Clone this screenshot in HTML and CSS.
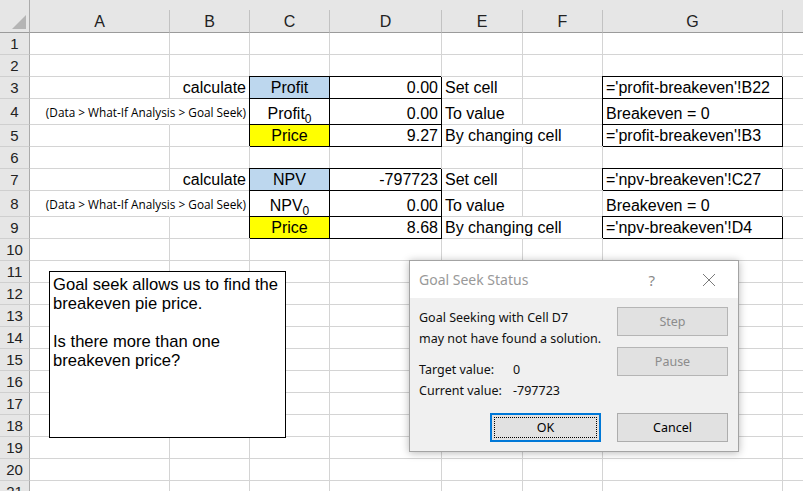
FILE: index.html
```html
<!DOCTYPE html>
<html lang="en">
<head>
<meta charset="utf-8">
<title>Goal Seek</title>
<link rel="stylesheet" href="styles.css">
</head>
<body>
<div class="sheet">
  <div class="grid">
    <div class="corner"><svg width="30" height="33" viewBox="0 0 30 33"><polygon points="12,29 26,29 26,15" fill="#b5b5b5"/></svg></div>
    <div class="topbar"></div>
    <div class="ch">A</div><div class="ch">B</div><div class="ch">C</div><div class="ch">D</div><div class="ch">E</div><div class="ch">F</div><div class="ch">G</div><div class="ch"></div>

    <div class="rh">1</div><div class="c"></div><div class="c"></div><div class="c"></div><div class="c"></div><div class="c"></div><div class="c"></div><div class="c"></div><div class="c"></div>
    <div class="rh">2</div><div class="c"></div><div class="c"></div><div class="c"></div><div class="c"></div><div class="c"></div><div class="c"></div><div class="c"></div><div class="c"></div>

    <div class="rh">3</div><div class="c"></div><div class="c r">calculate</div><div class="c m box blue">Profit</div><div class="c r box">0.00</div><div class="c">Set cell</div><div class="c"></div><div class="c box">='profit-breakeven'!B22</div><div class="c"></div>
    <div class="rh">4</div><div class="c nr"></div><div class="c r note">(Data &gt; What-If Analysis &gt; Goal Seek)</div><div class="c m box tall"><span>Profit<span class="sub">0</span></span></div><div class="c r box">0.00</div><div class="c">To value</div><div class="c"></div><div class="c box">Breakeven = 0</div><div class="c"></div>
    <div class="rh">5</div><div class="c"></div><div class="c"></div><div class="c m box yellow">Price</div><div class="c r box">9.27</div><div class="c nr">By changing cell</div><div class="c"></div><div class="c box">='profit-breakeven'!B3</div><div class="c"></div>
    <div class="rh">6</div><div class="c"></div><div class="c"></div><div class="c"></div><div class="c"></div><div class="c"></div><div class="c"></div><div class="c"></div><div class="c"></div>
    <div class="rh">7</div><div class="c"></div><div class="c r">calculate</div><div class="c m box blue">NPV</div><div class="c r box">-797723</div><div class="c">Set cell</div><div class="c"></div><div class="c box">='npv-breakeven'!C27</div><div class="c"></div>
    <div class="rh">8</div><div class="c nr"></div><div class="c r note">(Data &gt; What-If Analysis &gt; Goal Seek)</div><div class="c m box tall"><span>NPV<span class="sub">0</span></span></div><div class="c r box">0.00</div><div class="c">To value</div><div class="c"></div><div class="c">Breakeven = 0</div><div class="c"></div>
    <div class="rh">9</div><div class="c"></div><div class="c"></div><div class="c m box yellow">Price</div><div class="c r box">8.68</div><div class="c nr">By changing cell</div><div class="c"></div><div class="c box">='npv-breakeven'!D4</div><div class="c"></div>

    <div class="rh">10</div><div class="c"></div><div class="c"></div><div class="c"></div><div class="c"></div><div class="c"></div><div class="c"></div><div class="c"></div><div class="c"></div>
    <div class="rh">11</div><div class="c"></div><div class="c"></div><div class="c"></div><div class="c"></div><div class="c"></div><div class="c"></div><div class="c"></div><div class="c"></div>
    <div class="rh">12</div><div class="c"></div><div class="c"></div><div class="c"></div><div class="c"></div><div class="c"></div><div class="c"></div><div class="c"></div><div class="c"></div>
    <div class="rh">13</div><div class="c"></div><div class="c"></div><div class="c"></div><div class="c"></div><div class="c"></div><div class="c"></div><div class="c"></div><div class="c"></div>
    <div class="rh">14</div><div class="c"></div><div class="c"></div><div class="c"></div><div class="c"></div><div class="c"></div><div class="c"></div><div class="c"></div><div class="c"></div>
    <div class="rh">15</div><div class="c"></div><div class="c"></div><div class="c"></div><div class="c"></div><div class="c"></div><div class="c"></div><div class="c"></div><div class="c"></div>
    <div class="rh">16</div><div class="c"></div><div class="c"></div><div class="c"></div><div class="c"></div><div class="c"></div><div class="c"></div><div class="c"></div><div class="c"></div>
    <div class="rh">17</div><div class="c"></div><div class="c"></div><div class="c"></div><div class="c"></div><div class="c"></div><div class="c"></div><div class="c"></div><div class="c"></div>
    <div class="rh">18</div><div class="c"></div><div class="c"></div><div class="c"></div><div class="c"></div><div class="c"></div><div class="c"></div><div class="c"></div><div class="c"></div>
    <div class="rh">19</div><div class="c"></div><div class="c"></div><div class="c"></div><div class="c"></div><div class="c"></div><div class="c"></div><div class="c"></div><div class="c"></div>
    <div class="rh">20</div><div class="c"></div><div class="c"></div><div class="c"></div><div class="c"></div><div class="c"></div><div class="c"></div><div class="c"></div><div class="c"></div>
    <div class="rh">21</div><div class="c"></div><div class="c"></div><div class="c"></div><div class="c"></div><div class="c"></div><div class="c"></div><div class="c"></div><div class="c"></div>
  </div>

  <div class="textbox">
    <p>Goal seek allows us to find the<br>breakeven pie price.</p>
    <p>Is there more than one<br>breakeven price?</p>
  </div>

  <div class="dlg">
    <div class="dlg-title">
      <span class="dlg-name">Goal Seek Status</span>
      <span class="dlg-help">?</span>
      <svg class="dlg-close" width="14" height="14" viewBox="0 0 14 14"><path d="M1 1 L13 13 M13 1 L1 13" stroke="#7a7a7a" stroke-width="1" fill="none"/></svg>
    </div>
    <div class="dlg-body">
      <div class="dlg-top">
        <div class="dlg-msg">
          <p>Goal Seeking with Cell D7</p>
          <p>may not have found a solution.</p>
          <div class="dlg-vals">
            <span>Target value:</span><span>0</span>
            <span>Current value:</span><span>-797723</span>
          </div>
        </div>
        <div class="dlg-side">
          <button class="btn" disabled>Step</button>
          <button class="btn" disabled>Pause</button>
        </div>
      </div>
      <div class="dlg-foot">
        <button class="btn ok">OK</button>
        <button class="btn">Cancel</button>
      </div>
    </div>
  </div>
</div>
</body>
</html>
```

FILE: styles.css
```css
html, body {
  margin: 0;
  padding: 0;
  background: #fff;
}
body {
  font-family: "Liberation Sans", Arial, sans-serif;
  color: #000;
  overflow: hidden;
}
.sheet {
  position: relative;
  width: 803px;
  height: 491px;
  overflow: hidden;
}
.grid {
  display: grid;
  grid-template-columns: 30px 140px 80px 80px 112px 81px 80px 180px 40px;
  grid-template-rows: 10px 23px repeat(3, 22px) 26px repeat(3, 22px) 26px repeat(13, 22px);
}
.grid > div {
  box-sizing: border-box;
  min-width: 0;
}
.corner {
  grid-row: 1 / 3;
  grid-column: 1;
  background: #e6e6e6;
  border-right: 1px solid #ababab;
  border-bottom: 1px solid #9b9b9b;
  overflow: hidden;
}
.corner svg {
  display: block;
}
.topbar {
  grid-row: 1;
  grid-column: 2 / -1;
  background: #e6e6e6;
}
.ch {
  background: #e6e6e6;
  border-right: 1px solid #c2c2c2;
  border-bottom: 1px solid #9b9b9b;
  display: flex;
  align-items: center;
  justify-content: center;
  padding-top: 2px;
  font-size: 16px;
  color: #222;
}
.rh {
  background: #e6e6e6;
  border-right: 1px solid #ababab;
  border-bottom: 1px solid #cfcfcf;
  display: flex;
  align-items: center;
  justify-content: center;
  font-size: 15px;
  color: #222;
}
.c {
  border-right: 1px solid #d4d4d4;
  border-bottom: 1px solid #d4d4d4;
  display: flex;
  align-items: flex-end;
  padding: 0 3px 1px 3px;
  font-size: 16px;
  line-height: 18px;
  white-space: nowrap;
}
.r { justify-content: flex-end; }
.m { justify-content: center; }
.nr { border-right-color: transparent; }
.box {
  border-right-color: #000;
  border-bottom-color: #000;
  box-shadow: -1px -1px 0 0 #000;
}
.blue { background: #bdd7ee; }
.yellow { background: #ffff00; }
.tall { padding-bottom: 1px; }
.sub {
  font-size: 12px;
  line-height: 0;
  vertical-align: -4px;
}
.note {
  align-items: center;
  padding-bottom: 0;
  font-family: "Open Sans", "Noto Sans", sans-serif;
  font-size: 11.8px;
}

.textbox {
  position: absolute;
  left: 49px;
  top: 271px;
  width: 237px;
  height: 167px;
  box-sizing: border-box;
  border: 1px solid #000;
  background: #fff;
  padding: 3px 3px;
  font-size: 16.6px;
  line-height: 19px;
  white-space: nowrap;
}
.textbox p {
  margin: 0 0 19px 0;
}

.dlg {
  position: absolute;
  left: 409px;
  top: 260px;
  width: 330px;
  height: 192px;
  box-sizing: border-box;
  border: 1px solid #a3a3a3;
  background: #f0f0f0;
  box-shadow: 0 1px 8px rgba(0, 0, 0, 0.28);
  font-family: "Noto Sans", "Open Sans", sans-serif;
  font-size: 12.5px;
  color: #111;
}
.dlg-title {
  height: 37px;
  background: #fff;
  display: flex;
  align-items: center;
  padding-left: 9px;
}
.dlg-name {
  font-size: 14px;
  color: #999;
  flex: 1;
}
.dlg-help {
  font-size: 15px;
  color: #8a8a8a;
  margin-right: 47px;
}
.dlg-close {
  display: block;
  margin-right: 22px;
}
.dlg-body {
  padding: 9px 10px 9px 9px;
}
.dlg-top {
  display: flex;
  justify-content: space-between;
  height: 94px;
}
.dlg-msg p {
  margin: 0;
  line-height: 21px;
}
.dlg-vals {
  margin-top: 10px;
  display: grid;
  grid-template-columns: 94px auto;
  line-height: 21px;
}
.dlg-side {
  display: flex;
  flex-direction: column;
  gap: 11px;
}
.btn {
  width: 111px;
  height: 29px;
  box-sizing: border-box;
  border: 1px solid #adadad;
  background: #e1e1e1;
  font-family: "Noto Sans", "Open Sans", sans-serif;
  font-size: 12.5px;
  color: #000;
  padding: 0;
  margin: 0;
}
.btn:disabled {
  color: #8c8c8c;
  background: #e1e1e1;
  border-color: #b5b5b5;
}
.dlg-foot {
  margin-top: 12px;
  display: flex;
  justify-content: flex-end;
  gap: 16px;
}
.ok {
  border: 2px solid #0078d7;
  outline: 1px dotted #000;
  outline-offset: -5px;
}
```
